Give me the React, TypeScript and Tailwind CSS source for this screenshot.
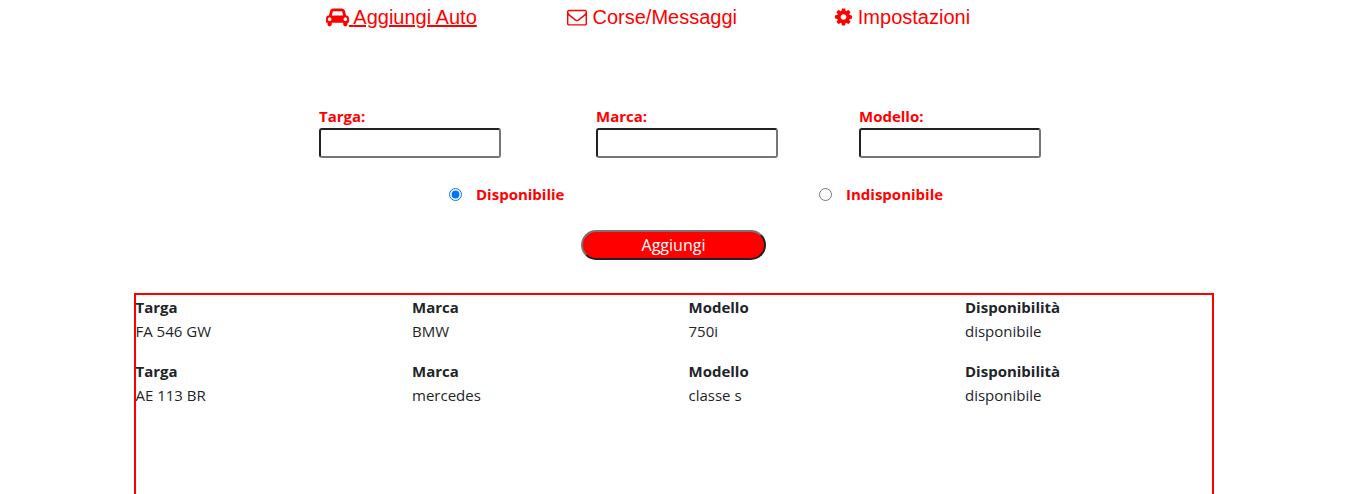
import React, { useState } from "react";

function CarIcon() {
  return (
    <svg viewBox="0 0 2048 1792" className="inline-block h-5 w-[23px] align-[-3px]" fill="currentColor" aria-hidden="true">
      <path d="M480 1088q0-66-47-113t-113-47-113 47-47 113 47 113 113 47 113-47 47-113zm36-320h1016l-89-357q-2-8-14-17.5t-21-9.5h-768q-9 0-21 9.5t-14 17.5zm1372 320q0-66-47-113t-113-47-113 47-47 113 47 113 113 47 113-47 47-113zm160-96v384q0 14-9 23t-23 9h-96v128q0 80-56 136t-136 56-136-56-56-136v-128h-1024v128q0 80-56 136t-136 56-136-56-56-136v-128h-96q-14 0-23-9t-9-23v-384q0-93 65.500-158.500t158.500-65.500h28l105-419q23-94 104-157.500t179-63.500h768q98 0 179 63.500t104 157.500l105 419h28q93 0 158.500 65.500t65.500 158.500z" />
    </svg>
  );
}

function EnvelopeIcon() {
  return (
    <svg viewBox="0 0 1792 1792" className="inline-block h-5 w-5 align-[-3px]" fill="currentColor" aria-hidden="true">
      <path d="M1664 1504v-768q-32 36-69 66-268 206-426 338-51 43-83 67t-86.5 48.5-102.5 24.5h-2q-48 0-102.5-24.5t-86.5-48.5-83-67q-158-132-426-338-37-30-69-66v768q0 13 9.500 22.500t22.500 9.500h1472q13 0 22.500-9.500t9.500-22.500zm0-1051v-24.500l-.5-13-3-12.500-5.500-9-9-7.500-14-2.500h-1472q-13 0-22.500 9.500t-9.500 22.500q0 168 147 284 193 152 401 317 6 5 35 29.500t46 37.500 44.500 31.500 50.500 27.500 43 9h2q20 0 43-9t50.500-27.500 44.500-31.500 46-37.500 35-29.500q208-165 401-317 54-43 100.500-115.500t46.500-131.500zm128-37v1088q0 66-47 113t-113 47h-1472q-66 0-113-47t-47-113v-1088q0-66 47-113t113-47h1472q66 0 113 47t47 113z" />
    </svg>
  );
}

function CogIcon() {
  return (
    <svg viewBox="128 0 1536 1792" className="inline-block h-5 w-[17px] align-[-3px]" fill="currentColor" aria-hidden="true">
      <path d="M1152 896q0-106-75-181t-181-75-181 75-75 181 75 181 181 75 181-75 75-181zm512-109v222q0 12-8 23t-20 13l-185 28q-19 54-39 91 35 50 107 138 10 12 10 25t-9 23q-27 37-99 108t-94 71q-12 0-26-9l-138-108q-44 23-91 38-16 136-29 186-7 28-36 28h-222q-14 0-24.500-8.500t-11.500-21.500l-28-184q-49-16-90-37l-141 107q-10 9-25 9-14 0-25-11-126-114-165-168-7-10-7-23 0-12 8-23 15-21 51-66.500t54-70.500q-27-50-41-99l-183-27q-13-2-21-12.500t-8-23.500v-222q0-12 8-23t19-13l186-28q14-46 39-92-40-57-107-138-10-12-10-24 0-10 9-23 26-36 98.500-107.500t94.500-71.500q13 0 26 10l138 107q44-23 91-38 16-136 29-186 7-28 36-28h222q14 0 24.500 8.500t11.500 21.500l28 184q49 16 90 37l142-107q9-9 24-9 13 0 25 10 129 119 165 170 7 8 7 22 0 12-8 23-15 21-51 66.500t-54 70.500q26 50 41 98l183 28q13 2 21 12.500t8 23.500z" />
    </svg>
  );
}

const navItems = [
  { label: "Aggiungi Auto", icon: CarIcon, active: true },
  { label: "Corse/Messaggi", icon: EnvelopeIcon, active: false },
  { label: "Impostazioni", icon: CogIcon, active: false },
];

const fields = [
  { id: "targa", label: "Targa:" },
  { id: "marca", label: "Marca:" },
  { id: "modello", label: "Modello:" },
];

const options = [
  { id: "disponibile", label: "Disponibilie" },
  { id: "indisponibile", label: "Indisponibile" },
];

const cars = [
  { Targa: "FA 546 GW", Marca: "BMW", Modello: "750i", Disponibilità: "disponibile" },
  { Targa: "AE 113 BR", Marca: "mercedes", Modello: "classe s", Disponibilità: "disponibile" },
];

export default function App() {
  const [status, setStatus] = useState("disponibile");

  return (
    <div className="flex min-h-screen flex-col bg-white font-['Open_Sans','Noto_Sans',sans-serif] text-[15px] leading-6 text-[#212529]">
      <nav className="flex justify-center pt-0.5 pr-[43px] font-['Liberation_Sans',Arial,sans-serif] text-xl leading-[30px] text-[#ff0000]">
        <ul className="grid w-full max-w-[752px] grid-cols-3 text-center">
          {navItems.map(({ label, icon: Icon, active }) => (
            <li key={label}>
              <a href="#" className={active ? "whitespace-nowrap underline" : "whitespace-nowrap"}>
                <Icon /> {label}
              </a>
            </li>
          ))}
        </ul>
      </nav>

      <form className="flex flex-col gap-6 pt-[72px] font-bold text-[#ff0000]" onSubmit={(e) => e.preventDefault()}>
        <div className="grid grid-cols-[277px_263px_182px] justify-center pl-[13px]">
          {fields.map((field) => (
            <div key={field.id} className="flex flex-col items-start">
              <label htmlFor={field.id}>{field.label}</label>
              <input
                id={field.id}
                type="text"
                className="h-[30px] w-[182px] rounded-[3px] border-2 border-t-[#212121] border-r-[#767676] border-b-[#767676] border-l-[#212121] bg-white px-1 font-normal text-black"
              />
            </div>
          ))}
        </div>

        <div className="grid grid-cols-[370px_124px] justify-center pl-[45px]">
          {options.map((option) => (
            <div key={option.id} className="flex items-center gap-3.5">
              <input
                id={option.id}
                type="radio"
                name="status"
                checked={status === option.id}
                onChange={() => setStatus(option.id)}
                className="h-[13px] w-[13px]"
              />
              <label htmlFor={option.id}>{option.label}</label>
            </div>
          ))}
        </div>

        <button
          type="submit"
          className="h-[30px] w-[185px] self-center rounded-full border-2 border-t-[#767676] border-r-[#212121] border-b-[#212121] border-l-[#767676] bg-[#ff0000] text-base font-normal text-white"
        >
          Aggiungi
        </button>
      </form>

      <section className="mx-auto mt-[33px] flex w-full max-w-[1080px] flex-1 flex-col gap-4 border-2 border-b-0 border-[#ff0000]">
        {cars.map((car) => (
          <dl key={car.Targa} className="grid grid-cols-4 gap-x-[30px]">
            {Object.entries(car).map(([name, value]) => (
              <div key={name}>
                <dt className="font-bold">{name}</dt>
                <dd>{value}</dd>
              </div>
            ))}
          </dl>
        ))}
      </section>
    </div>
  );
}
